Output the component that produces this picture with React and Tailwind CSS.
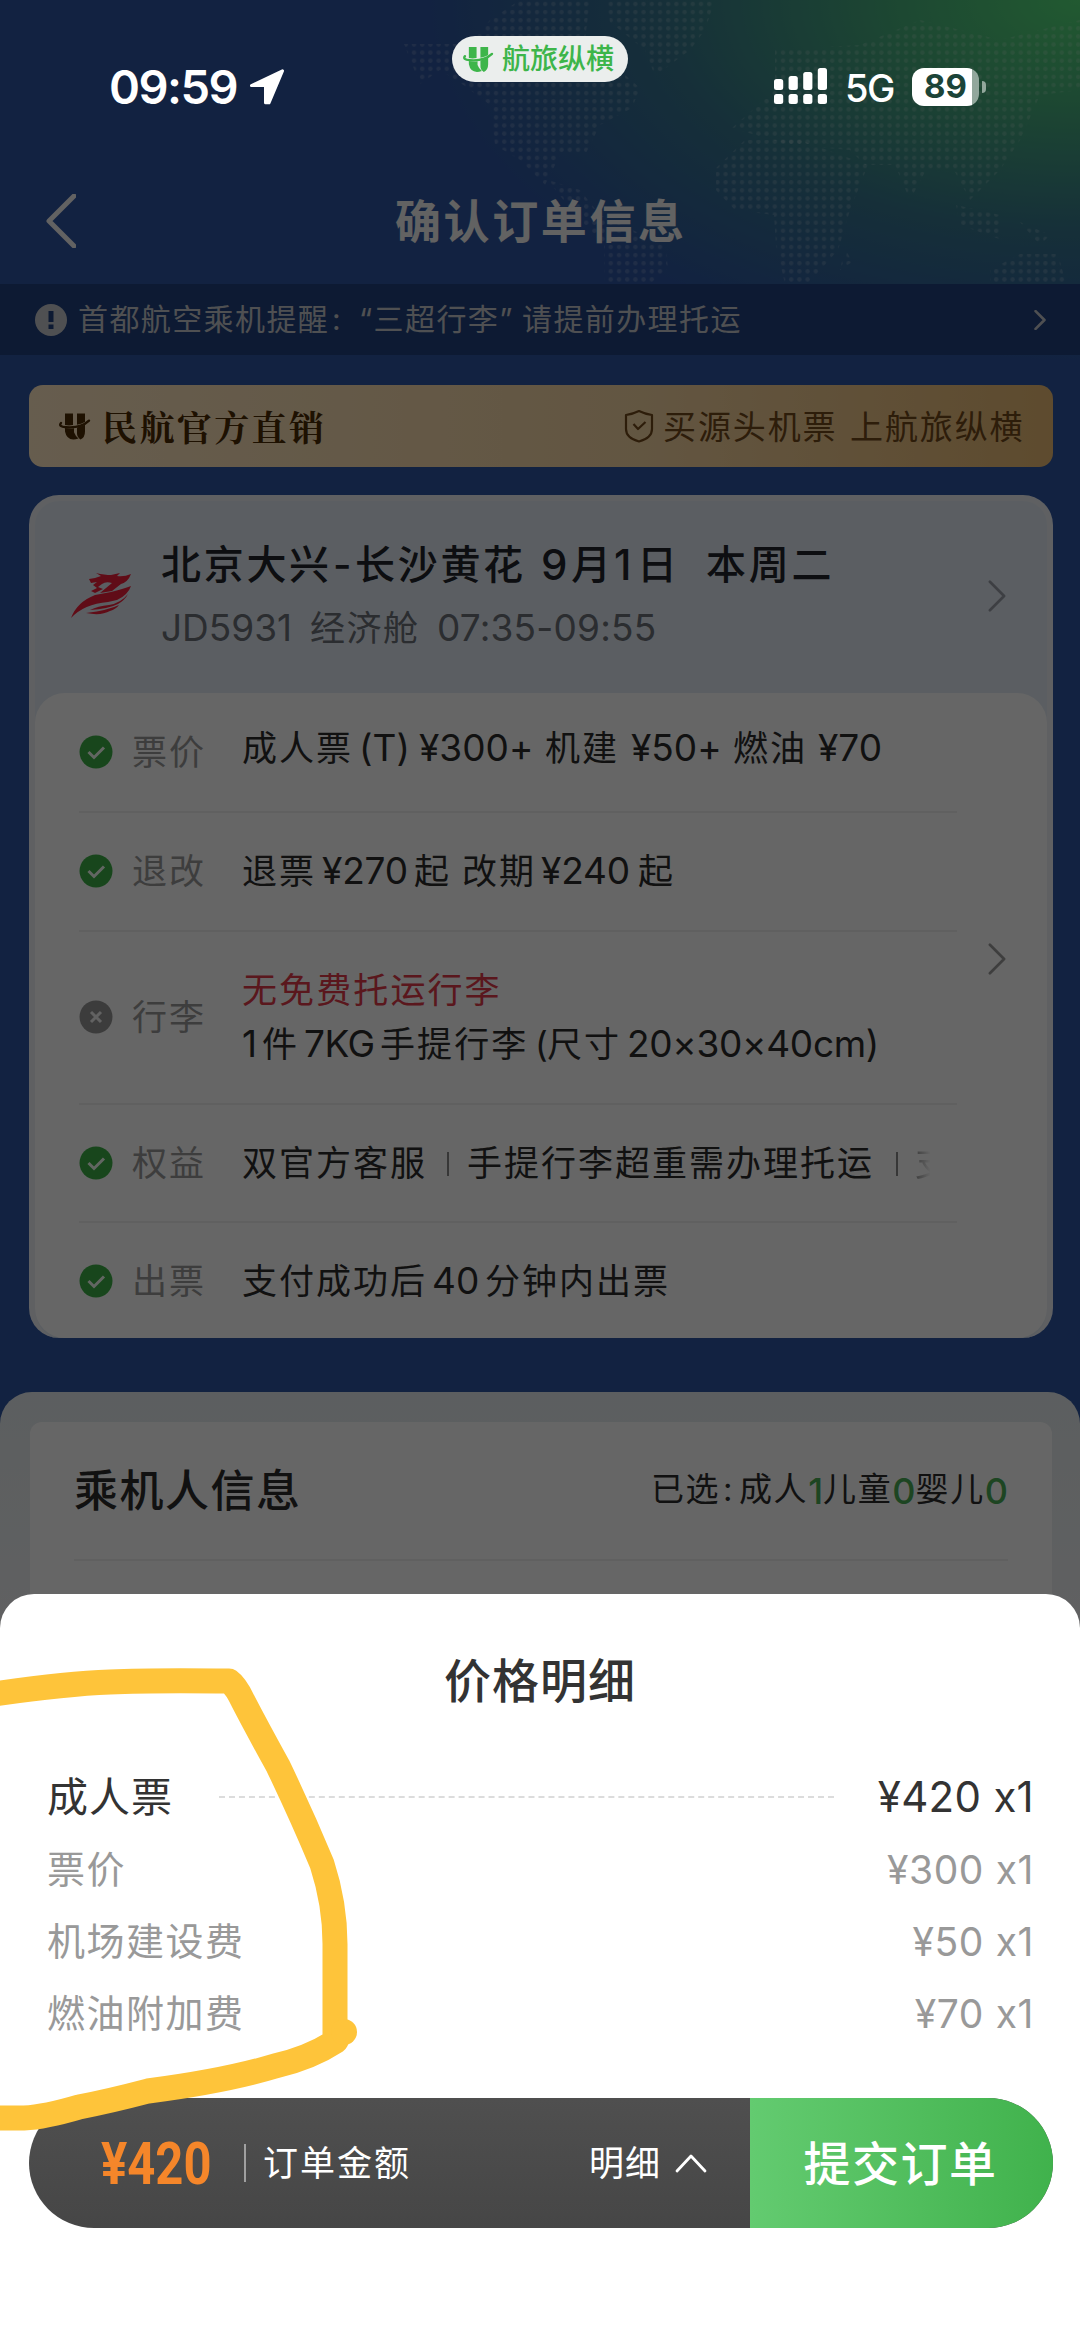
const font = "font-['Inter','Noto_Sans_CJK_SC',sans-serif] [font-feature-settings:'calt'_0]"

function Chevron({ className, d = 'M1 1 L9 9 L1 17', box = '0 0 10 18', width = 1.5 }) {
  return (
    <svg viewBox={box} className={className} fill="none" stroke="currentColor">
      <path d={d} strokeWidth={width} strokeLinecap="round" strokeLinejoin="round" />
    </svg>
  )
}

function Logo({ className }) {
  return (
    <svg viewBox="0 0 34 28" className={className}>
      <path
        d="M7 1h8v11.500q-4 .8-8 0zM19 1h8v8.500q-4 2-8 2.700zM7 15.500q4.500.8 9 .2l0 4 q1.500 4 4.500 6.300q-11.500 3.500-13.500-7zM19 15q4-.9 8-3v7q0 6-4.500 8q-3.500-2.500-3.500-6z"
        fill="currentColor"
      />
      <path
        d="M3 10.500q-3 3.500 5 4.200q15 1.200 23-6.500"
        fill="none"
        stroke="currentColor"
        strokeWidth="2.400"
        strokeLinecap="round"
      />
    </svg>
  )
}

function AirlineLogo() {
  return (
    <svg viewBox="0 0 60 46" className="h-[46px] w-[60px] shrink-0" fill="#f0203a">
      <path d="M18 6L24 5 30 3 25 0Q34 2 40 2L49 0 46 3Q53 4 60 1Q57 9 50 11L41 18 29 20 41 10Q35 8 31 11L27 14 32 16 24 20 20 18 26 15 22 12 26 9 20 10z" />
      <path d="M60 13Q57 22 46 27L37 29Q13 31 0 45Q6 29 24 22L40 19Q52 16 60 13z" />
      <path d="M57 21Q50 30 38 32 27 33 19 37 37 36 47 31 54 27 57 21z" />
      <path d="M48 32Q38 37 15 40 30 43 39 38 45 36 48 32z" />
    </svg>
  )
}

function StatusBar() {
  return (
    <div className="relative z-20 flex h-[142px] shrink-0 text-white">
      <div className="ml-[109px] flex h-[173px] w-[343px] items-center">
        <span className="text-[47px] leading-none font-semibold tracking-[-1.500px]">09:59</span>
        <svg viewBox="0 0 36 36" className="ml-[12px] h-[36px] w-[36px]">
          <path
            d="M33.500 1.800 L2.500 16.500 H16.500 V33.800 H20 Z"
            fill="white"
            stroke="white"
            strokeWidth="3"
            strokeLinejoin="round"
          />
        </svg>
      </div>
      <div className="mt-[36px] flex h-[46px] w-[176px] items-center rounded-full bg-[#ebeeed] text-[#3db54a]">
        <Logo className="ml-[10px] h-[27px] w-[33px]" />
        <span className="ml-[7px] text-[28px] leading-none font-medium">航旅纵横</span>
      </div>
      <div className="ml-[146px] flex h-[173px] items-center">
        <svg viewBox="0 0 54 37" className="h-[37px] w-[54px]" fill="white">
          {[11, 8, 4, 0].map((y, i) => (
            <g key={y}>
              <rect x={i * 14.600} y={y} width="9.200" height={22 - y} rx="2.500" />
              <rect x={i * 14.600} y="26" width="9.200" height="10" rx="2.500" />
            </g>
          ))}
        </svg>
        <span className="ml-[17px] w-[67px] pt-[2px] text-[38px] leading-none font-medium tracking-[-1.500px]">5G</span>
        <div className="flex h-[38px] w-[67px] items-center justify-center rounded-[12px] bg-linear-to-r from-white from-89% to-[#92a79c] to-89%">
          <span className="text-[33px] leading-none font-bold text-[#1c4438]">89</span>
        </div>
        <div className="ml-[3px] h-[12px] w-[4px] rounded-r-full bg-[#92a79c]" />
      </div>
    </div>
  )
}

function WorldMap() {
  return (
    <svg viewBox="0 0 1080 284" className="absolute top-0 left-0 h-[284px] w-[1080px]">
      <defs>
        <pattern id="dots" width="8.200" height="8.100" patternUnits="userSpaceOnUse">
          <circle cx="4" cy="4" r="2.200" fill="white" fillOpacity="0.170" />
        </pattern>
      </defs>
      <g fill="url(#dots)">
        <path d="M404 44L470 44 490 20 520 0H590L585 40 640 88 632 108 600 125 585 155 560 155 545 185 520 160 495 145 490 105 465 86 440 70 420 84z" />
        <path d="M606 0H715L705 30 690 50 655 76 645 50 610 22z" />
        <path d="M548 180L580 190 600 215 665 245 668 268 650 284H605L604 245 575 215z" />
        <path d="M716 168L745 140 800 140 868 165 850 210 838 250 808 284H785L776 245 774 215 735 210 716 190z" />
        <path d="M732 128L775 90 775 50 860 45 920 20 1000 40 1080 20V90L1040 95 1020 140 1000 170 970 200 955 172 925 172 910 200 895 165 865 165 850 150 790 145z" />
        <path d="M956 205L1000 215 1002 240 960 225zM1020 222L1050 235 1040 245zM845 248L852 262 840 270z" />
        <path d="M990 270L1020 254 1058 254 1066 284H990z" />
      </g>
    </svg>
  )
}

function StateIcon({ ok }) {
  return (
    <svg viewBox="0 0 34 34" className="h-[34px] w-[34px] shrink-0">
      <circle cx="17" cy="17" r="16.500" fill={ok ? '#3cb047' : '#969696'} />
      <path
        d={ok ? 'M9.500 17 L15 22.500 L25 12.500' : 'M12 12 L22 22 M22 12 L12 22'}
        fill="none"
        stroke={ok ? '#f4fff5' : '#f4f4f4'}
        strokeWidth="3"
      />
    </svg>
  )
}

function Runs({ runs, className }) {
  return (
    <div className={`flex whitespace-nowrap ${className || ''}`}>
      {runs.map(([text, width]) => (
        <span key={text + width} className={width}>
          {text}
        </span>
      ))}
    </div>
  )
}

function Row({ ok = true, label, height, children, last }) {
  return (
    <div
      className={`flex w-[878px] items-center leading-[42px] ${height} ${last ? '' : 'border-b-2 border-[#efefef]'}`}
    >
      <StateIcon ok={ok} />
      <span className="ml-[19px] w-[110px] shrink-0 text-[35px] tracking-[2px] text-[#999]">{label}</span>
      {children}
    </div>
  )
}

const bar = <i className="mt-[10px] h-[24px] w-[2px] shrink-0 bg-[#8a8a8a]" />

function FlightCard() {
  return (
    <div className="mr-[27px] ml-[29px] mt-[28px] h-[843px] rounded-[30px] border-[6px] border-b-0 border-[#edf0f6] bg-[#e4ecf5]">
      <div className="flex h-[192px] items-center pb-[3px] pl-[36px]">
        <AirlineLogo />
        <div className="ml-[30px] w-[827px]">
          <Runs
            className="text-[40px] leading-[56px] tracking-[2.700px] text-[#22252b]"
            runs={[
              ['北京大兴', 'w-[172px] font-medium'],
              ['-', 'w-[22px] font-medium'],
              ['长沙黄花', 'w-[186px] font-medium'],
              ['9', 'w-[30px] text-[42px] font-medium'],
              ['月', 'w-[43px] font-medium'],
              ['1', 'w-[23px] text-[42px] font-medium'],
              ['日', 'w-[69px] font-medium'],
              ['本周二', 'font-medium'],
            ]}
          />
          <Runs
            className="mt-[9px] text-[37px] leading-[52px] text-[#6c7079]"
            runs={[
              ['JD5931', 'w-[149px]'],
              ['经济舱', 'w-[127px] text-[35px] tracking-[1.500px]'],
              ['07:35-09:55', 'tracking-[0.200px]'],
            ]}
          />
        </div>
        <Chevron className="h-[32px] w-[18px] text-[#9a9da8]" />
      </div>
      <div className="flex h-[645px] items-center rounded-[30px] bg-white pt-[2px] pl-[44px] text-[35px] text-[#2c2c2c]">
        <div className="w-[909px]">
          <Row label="票价" height="h-[119px]">
            <Runs
              className="-mt-[8px] tracking-[2px]"
              runs={[
                ['成人票', 'w-[117px]'],
                ['(T)', 'w-[60px] text-[37px] tracking-normal'],
                ['¥300+', 'w-[126px] text-[37px] tracking-normal'],
                ['机建', 'w-[86px]'],
                ['¥50+', 'w-[102px] text-[37px] tracking-normal'],
                ['燃油', 'w-[85px]'],
                ['¥70', 'text-[37px] tracking-normal'],
              ]}
            />
          </Row>
          <Row label="退改" height="h-[119px]">
            <Runs
              className="tracking-[2px]"
              runs={[
                ['退票', 'w-[80px]'],
                ['¥270', 'w-[92px] text-[37px] tracking-[-0.200px]'],
                ['起', 'w-[48px]'],
                ['改期', 'w-[79px]'],
                ['¥240', 'w-[97px] text-[37px] tracking-[-0.200px]'],
                ['起', ''],
              ]}
            />
          </Row>
          <Row ok={false} label="行李" height="h-[173px]">
            <div className="leading-[54px] tracking-[2.100px]">
              <div className="text-[#e23a49]">无免费托运行李</div>
              <Runs
                runs={[
                  ['1', 'w-[20px] text-[37px]'],
                  ['件', 'w-[42px]'],
                  ['7KG', 'w-[76px] text-[37px] tracking-[-0.500px]'],
                  ['手提行李', 'w-[155px]'],
                  ['(', 'w-[12px]'],
                  ['尺寸', 'w-[80px]'],
                  ['20×30×40cm)', 'text-[37px] tracking-[-0.300px]'],
                ]}
              />
            </div>
          </Row>
          <Row label="权益" height="h-[118px]">
            <div className="flex w-[710px] whitespace-nowrap tracking-[2px]">
              <span className="w-[205px] shrink-0">双官方客服</span>
              {bar}
              <span className="ml-[18px] w-[429px] shrink-0">手提行李超重需办理托运</span>
              {bar}
              <span className="ml-[17px] bg-linear-to-r from-[#999] to-transparent to-42% bg-clip-text text-transparent">
                支
              </span>
            </div>
          </Row>
          <Row label="出票" height="h-[117px]" last>
            <Runs
              className="tracking-[2px]"
              runs={[
                ['支付成功后', 'w-[190px]'],
                ['40', 'w-[53px] text-[37px] tracking-normal'],
                ['分钟内出票', ''],
              ]}
            />
          </Row>
        </div>
        <Chevron className="-mt-[116px] h-[32px] w-[18px] text-[#9b9b9b]" />
      </div>
    </div>
  )
}

function OrderPage() {
  return (
    <>
      <div className="flex h-[142px] items-start text-[#f4f4f4]">
        <Chevron
          className="mt-[52px] ml-[46px] h-[54px] w-[30px]"
          box="0 0 30 54"
          d="M28 2 L3 27 L28 52"
          width={5}
        />
        <h1 className="mt-[50px] ml-[319px] text-[46px] leading-[58px] font-bold tracking-[2.600px]">
          确认订单信息
        </h1>
      </div>
      <div className="flex h-[71px] items-center bg-[#21427f] text-[#c6c8cd]">
        <svg viewBox="0 0 32 32" className="ml-[35px] h-[32px] w-[32px]">
          <circle cx="16" cy="16" r="16" fill="currentColor" />
          <path d="M13.500 7h5v11h-5zM13.500 20.500h5v4.500h-5z" fill="#21427f" />
        </svg>
        <Runs
          className="ml-[11px] w-[956px] text-[30px] tracking-[1.400px]"
          runs={[
            ['首都航空乘机提醒', 'w-[254px]'],
            [':', 'w-[27px]'],
            ['“三超行李”', 'w-[163px]'],
            ['请提前办理托运', ''],
          ]}
        />
        <Chevron className="h-[20px] w-[12px]" width={2.400} />
      </div>
      <div className="mr-[27px] ml-[29px] mt-[30px] flex h-[82px] items-center rounded-[14px] bg-linear-to-r from-[#ffe8c3] via-[#f6d6a4] via-60% to-[#eabb74] text-[#4d2c04]">
        <Logo className="ml-[29px] h-[29px] w-[34px]" />
        <span className="ml-[10px] w-[522px] font-['Noto_Serif_CJK_SC','Noto_Sans_CJK_SC',serif] text-[35px] leading-none font-bold tracking-[2.400px]">
          民航官方直销
        </span>
        <svg viewBox="0 0 30 34" className="h-[34px] w-[30px] text-[#72491a]" fill="none" stroke="currentColor">
          <path
            d="M15 2 Q21 5 28 6 V20 Q28 29 15 32.500 Q2 29 2 20 V6 Q9 5 15 2 Z M9.500 15 L14 20 L21.500 13"
            strokeWidth="2.200"
            strokeLinejoin="round"
          />
        </svg>
        <Runs
          className="ml-[9px] pt-[2px] text-[33px] leading-none tracking-[1.900px] text-[#72491a]"
          runs={[
            ['买源头机票', 'w-[187px]'],
            ['上航旅纵横', ''],
          ]}
        />
      </div>
      <FlightCard />
      <div className="mt-[54px] h-[240px] rounded-t-[32px] bg-linear-to-b from-[#e6ecef] to-[#f0f2f4] pr-[28px] pl-[30px] pt-[30px]">
        <div className="h-[210px] rounded-t-[12px] bg-white px-[44px] text-[#2c2c2c]">
          <div className="flex h-[139px] items-center justify-between border-b-2 border-[#efefef]">
            <h2 className="text-[44px] leading-none font-medium tracking-[1.500px]">乘机人信息</h2>
            <div className="flex text-[33px] leading-none tracking-[1.600px]">
              <span className="w-[72px]">已选</span>
              <span className="w-[16px]">:</span>
              成人<b className="text-[36px] font-medium tracking-normal text-[#49ad55]">1</b>儿童
              <b className="text-[36px] font-medium tracking-normal text-[#49ad55]">0</b>婴儿
              <b className="text-[36px] font-medium tracking-normal text-[#49ad55]">0</b>
            </div>
          </div>
        </div>
      </div>
    </>
  )
}

const fees = [
  ['票价', '¥300 x1'],
  ['机场建设费', '¥50 x1'],
  ['燃油附加费', '¥70 x1'],
]

function PriceSheet() {
  return (
    <div className="relative z-20 -mt-[38px] h-[752px] rounded-t-[34px] bg-white">
      <h2 className="pt-[57px] text-center text-[47px] leading-[60px] font-medium tracking-[1px] text-[#333]">
        价格明细
      </h2>
      <div className="mt-[50px] mr-[46px] ml-[47px] text-[#999]">
        <div className="flex h-[72px] items-center text-[41px] leading-none text-[#333]">
          <span className="w-[172px] tracking-[1px]">成人票</span>
          <i className="w-[615px] border-t-2 border-dashed border-[#dcdcdc]" />
          <span className="ml-auto text-[42px] tracking-[0.300px]">¥420 x1</span>
        </div>
        {fees.map(([name, price]) => (
          <div key={name} className="flex h-[72px] items-center justify-between text-[38px] leading-none">
            <span className="tracking-[1.500px]">{name}</span>
            <span className="text-[39px] tracking-[0.600px]">{price}</span>
          </div>
        ))}
      </div>
      <div className="mr-[27px] ml-[29px] mt-[49px] flex h-[130px] items-center overflow-hidden rounded-full bg-linear-to-b from-[#4f4f4f] to-[#464646] text-white">
        <span className="ml-[72px] w-[115px] origin-left scale-x-[0.830] font-['Roboto'] text-[59px] leading-none font-bold text-[#f5862a]">
          ¥420
        </span>
        <i className="ml-[28px] h-[38px] w-[2px] bg-[#a0a0a0]" />
        <span className="ml-[17px] w-[326px] text-[35px] leading-none tracking-[2px]">订单金额</span>
        <span className="text-[35px] leading-none tracking-[1px]">明细</span>
        <Chevron
          className="ml-[14px] h-[20px] w-[32px]"
          box="0 0 32 20"
          d="M2 18 L16 3 L30 18"
          width={2.800}
        />
        <button className="ml-auto h-full w-[303px] bg-linear-to-r from-[#63cb70] to-[#40b24c] pr-[2px] text-[47px] leading-none font-medium tracking-[1.500px]">
          提交订单
        </button>
      </div>
      {/* marker scribble */}
      <svg viewBox="0 0 380 560" className="pointer-events-none absolute top-0 left-0 h-[560px] w-[380px]">
        <path
          d="M-20 102 Q60 90 110 88 Q150 86 229 87 Q236 92 243 107 Q257 134 278 172 Q302 222 322 270 Q335 310 335 350 V440 M340 439 L336 447 Q310 464 275 472 Q225 487 148 497 Q110 507 79 513 Q45 523 24 524 H-20"
          fill="none"
          stroke="#fec43a"
          strokeWidth="25"
          strokeLinecap="round"
          strokeLinejoin="round"
        />
        <circle cx="344" cy="438" r="13" fill="#fec43a" />
      </svg>
    </div>
  )
}

export default function App() {
  return (
    <div className={`relative flex h-[2346px] w-[1080px] flex-col overflow-hidden bg-[#2e56a2] ${font}`}>
      <div className="absolute inset-x-0 top-0 h-[400px] bg-[radial-gradient(ellipse_650px_360px_at_100%_0%,#55e07a_0%,#48b07e_30%,#37768f_65%,transparent_100%)]" />
      <WorldMap />
      <StatusBar />
      <div className="relative h-[1490px] shrink-0 overflow-hidden">
        <OrderPage />
      </div>
      <div className="absolute inset-0 z-10 bg-black/60" />
      <PriceSheet />
    </div>
  )
}
